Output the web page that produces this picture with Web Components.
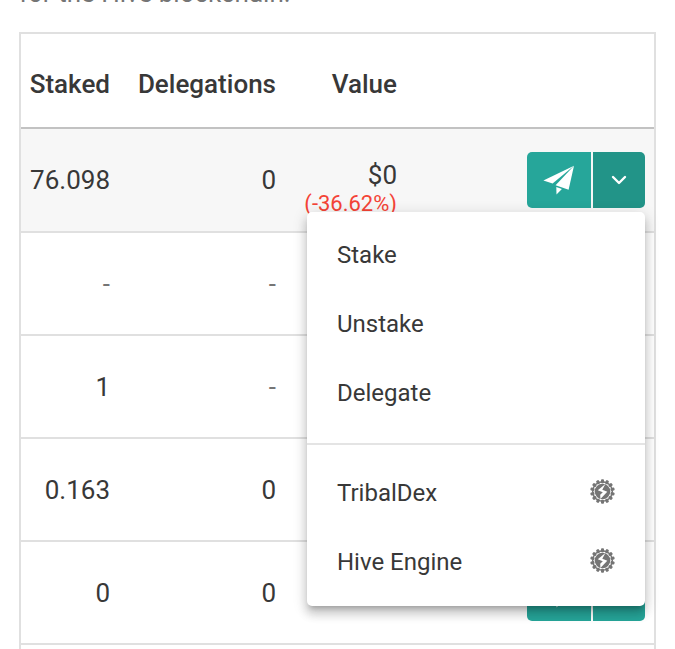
<!DOCTYPE html>
<html lang="en">
<head>
<meta charset="utf-8">
<meta name="viewport" content="width=device-width">
<title>Tokens</title>
<style>
html, body { margin: 0; height: 100%; overflow: hidden; background: #fff; }
body { font-family: Roboto, "Liberation Sans", sans-serif; font-size: 26px; color: #383838; }
</style>
</head>
<body>
<wallet-page>
  <span slot="intro">for the Hive blockchain.</span>
  <token-table></token-table>
</wallet-page>
<script>
const root = (el, html) => {
  const t = document.createElement('template');
  t.innerHTML = html;
  el.attachShadow({ mode: 'open' }).append(t.content.cloneNode(true));
};

customElements.define('wallet-page', class extends HTMLElement {
  constructor() {
    super();
    root(this, `<style>
      :host { display: block; padding: 0 19px; }
      p { margin: -22px 0 24px; font-size: 26px; line-height: 30px; color: #757575; }
    </style><p><slot name="intro"></slot></p><slot></slot>`);
  }
});

customElements.define('engine-icon', class extends HTMLElement {
  constructor() {
    super();
    const teeth = Array.from({ length: 14 }, (_, i) =>
      `<rect x="11" y="0.2" width="3" height="4" rx="1" transform="rotate(${i * 360 / 14} 12.5 12.5)"/>`).join('');
    root(this, `<style>:host { display: block; padding-bottom: 3px; } svg { display: block; }</style>
      <svg width="25" height="25" viewBox="0 0 25 25" fill="#757575" aria-hidden="true">
        ${teeth}<circle cx="12.5" cy="12.5" r="9.8" fill="none" stroke="#757575" stroke-width="1.5"/>
        <circle cx="12.5" cy="12.5" r="7.8"/>
        <path fill="#fff" d="M15.4 5 7.8 11.3l5 2-2.6 2.4.2 4.4 6.9-7.3-5-2z"/>
      </svg>`);
  }
});

customElements.define('menu-item', class extends HTMLElement {
  constructor() {
    super();
    root(this, `<style>
      :host { display: block; }
      button { display: flex; align-items: center; justify-content: space-between; width: 100%; height: 69px;
        padding: 0 30px; border: 0; background: none; font: inherit; font-size: 24px; color: inherit; text-align: left; cursor: pointer; }
    </style><button type="button" role="menuitem"><span><slot></slot></span><slot name="icon"></slot></button>`);
  }
});

customElements.define('action-menu', class extends HTMLElement {
  constructor() {
    super();
    root(this, `<style>
      :host { display: block; padding: 8px 0 10px; background: #fff; border-radius: 5px;
        box-shadow: 0 5px 5px -3px rgba(0,0,0,.2), 0 8px 10px 1px rgba(0,0,0,.14), 0 3px 14px 2px rgba(0,0,0,.12); }
      hr { margin: 16px 0 13px; border: 0; border-top: 2px solid #e4e4e4; }
    </style>
    <div role="menu">
      <menu-item>Stake</menu-item><menu-item>Unstake</menu-item><menu-item>Delegate</menu-item>
      <hr>
      <menu-item>TribalDex<engine-icon slot="icon"></engine-icon></menu-item>
      <menu-item>Hive Engine<engine-icon slot="icon"></engine-icon></menu-item>
    </div>`);
  }
});

customElements.define('token-actions', class extends HTMLElement {
  constructor() {
    super();
    root(this, `<style>
      :host { display: inline-flex; position: relative; vertical-align: middle; text-align: left; }
      .group { display: flex; gap: 2px; }
      button { display: flex; align-items: center; justify-content: center; height: 56px; padding: 0; border: 0; color: #fff; cursor: pointer; }
      .send { width: 64px; background: #26a69a; border-radius: 5px 0 0 5px; }
      .more { width: 52px; background: #229488; border-radius: 0 5px 5px 0; }
      :host(:not([open])) .more { background: #26a69a; }
      ::slotted(action-menu) { position: absolute; z-index: 2; top: 60px; right: 0; width: 338px; }
    </style>
    <div class="group">
      <button class="send" type="button" aria-label="Transfer">
        <svg width="32" height="30" viewBox="0 0 32 30" fill="#fff" aria-hidden="true">
          <path d="M31 .8.4 15.6l9.2 3z"/><path d="M31 .8 12.6 20.2l13 4.5z"/><path d="m13.3 22 5.6 2-5.4 5.4z"/>
        </svg>
      </button>
      <button class="more" type="button" aria-label="More actions">
        <svg width="16" height="10" viewBox="0 0 16 10" fill="none" stroke="#fff" stroke-width="2.4" stroke-linecap="round" stroke-linejoin="round" aria-hidden="true"><path d="m2 2 6 6 6-6"/></svg>
      </button>
    </div><slot></slot>`);
  }
});

customElements.define('token-table', class extends HTMLElement {
  constructor() {
    super();
    root(this, `<style>
      :host { display: block; border: 2px solid #e0e0e0; }
      table { width: 100%; table-layout: fixed; border-collapse: separate; border-spacing: 0; }
      .staked { width: 89px; } .delegations { width: 166px; } .value { width: 121px; }
      th, td { box-sizing: border-box; height: 103px; padding: 0; text-align: right; font-size: 26px; line-height: 30px; border-bottom: 2px solid #e0e0e0; }
      th { height: 95px; padding-top: 6px; font-weight: 500; border-color: #c2c2c2; }
      .active td { height: 104px; background: #f7f7f7; }
      td.worth { vertical-align: top; padding-top: 31px; }
      td.none { color: #757575; }
      .change { display: block; font-size: 22px; line-height: 28px; color: #f44336; }
      td:last-child { padding-right: 9px; }
    </style>
    <table>
      <colgroup><col class="staked"><col class="delegations"><col class="value"><col></colgroup>
      <thead><tr><th scope="col">Staked</th><th scope="col">Delegations</th><th scope="col">Value</th><th></th></tr></thead>
      <tbody>
        <tr class="active"><td>76.098</td><td>0</td><td class="worth">$0<span class="change">(-36.62%)</span></td>
          <td><token-actions open><action-menu></action-menu></token-actions></td></tr>
        <tr><td class="none">-</td><td class="none">-</td><td></td><td></td></tr>
        <tr><td>1</td><td class="none">-</td><td></td><td></td></tr>
        <tr><td>0.163</td><td>0</td><td></td><td></td></tr>
        <tr><td>0</td><td>0</td><td></td><td><token-actions></token-actions></td></tr>
        <tr><td></td><td></td><td></td><td></td></tr>
      </tbody>
    </table>`);
  }
});
</script>
</body>
</html>
